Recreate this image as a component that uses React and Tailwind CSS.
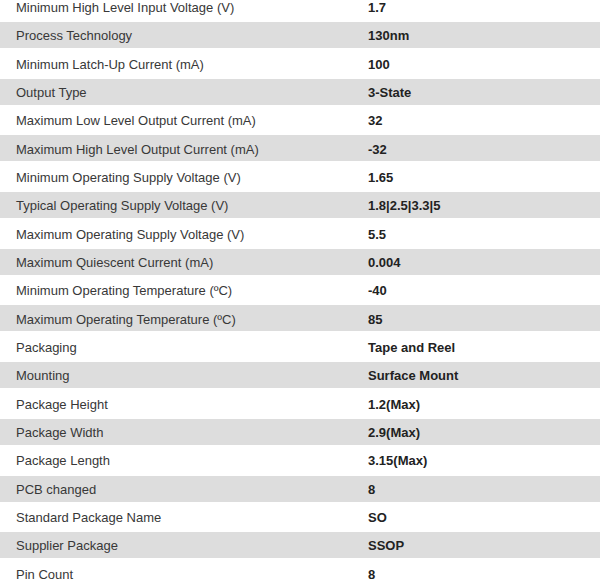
import React from "react";

const rows = [
  ["Minimum High Level Input Voltage (V)", "1.7"],
  ["Process Technology", "130nm"],
  ["Minimum Latch-Up Current (mA)", "100"],
  ["Output Type", "3-State"],
  ["Maximum Low Level Output Current (mA)", "32"],
  ["Maximum High Level Output Current (mA)", "-32"],
  ["Minimum Operating Supply Voltage (V)", "1.65"],
  ["Typical Operating Supply Voltage (V)", "1.8|2.5|3.3|5"],
  ["Maximum Operating Supply Voltage (V)", "5.5"],
  ["Maximum Quiescent Current (mA)", "0.004"],
  ["Minimum Operating Temperature (\u00BAC)", "-40"],
  ["Maximum Operating Temperature (\u00BAC)", "85"],
  ["Packaging", "Tape and Reel"],
  ["Mounting", "Surface Mount"],
  ["Package Height", "1.2(Max)"],
  ["Package Width", "2.9(Max)"],
  ["Package Length", "3.15(Max)"],
  ["PCB changed", "8"],
  ["Standard Package Name", "SO"],
  ["Supplier Package", "SSOP"],
  ["Pin Count", "8"],
];

export default function App() {
  return (
    <div className="w-[601px] h-[586px] overflow-hidden bg-white" style={{ fontFamily: '"Liberation Sans", Arial, sans-serif' }}>
      <div className="mt-[-7.5px] pr-px">
        {rows.map(([k, v], i) => (
          <div key={i} className="h-[28.35px] py-[1.17px]">
            <div className={`grid grid-cols-[352px_1fr] h-full items-center pt-[2px] text-[13px] text-[#383838] ${i % 2 === 1 ? "bg-[#dddddd]" : ""}`}>
              <div className="pl-4">{k}</div>
              <div className="pl-4 font-bold text-[#222]">{v}</div>
            </div>
          </div>
        ))}
      </div>
    </div>
  );
}
